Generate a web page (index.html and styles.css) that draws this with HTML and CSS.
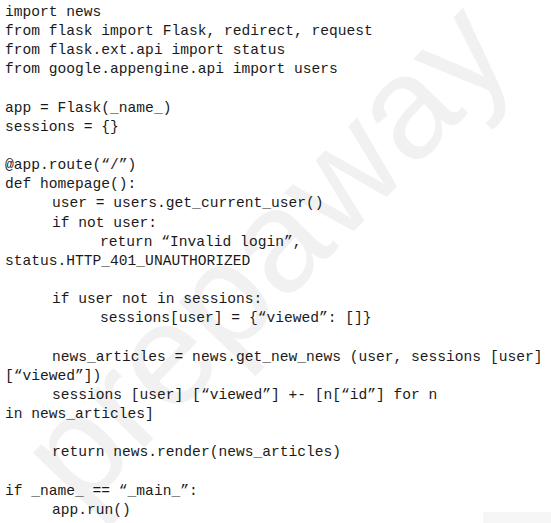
FILE: index.html
```html
<!DOCTYPE html>
<html>
<head>
<meta charset="utf-8">
<link rel="stylesheet" href="styles.css">
</head>
<body>
<div class="page">
  <div class="watermark">prepaway</div>
  <div class="code">
    <div class="line">import news</div>
    <div class="line">from flask import Flask, redirect, request</div>
    <div class="line">from flask.ext.api import status</div>
    <div class="line">from google.appengine.api import users</div>
    <div class="line blank"></div>
    <div class="line">app = Flask(_name_)</div>
    <div class="line">sessions = {}</div>
    <div class="line blank"></div>
    <div class="line">@app.route(“/”)</div>
    <div class="line">def homepage():</div>
    <div class="line i1">user = users.get_current_user()</div>
    <div class="line i1">if not user:</div>
    <div class="line i2">return “Invalid login”,</div>
    <div class="line">status.HTTP_401_UNAUTHORIZED</div>
    <div class="line blank"></div>
    <div class="line i1">if user not in sessions:</div>
    <div class="line i2">sessions[user] = {“viewed”: []}</div>
    <div class="line blank"></div>
    <div class="line i1">news_articles = news.get_new_news (user, sessions [user]</div>
    <div class="line">[“viewed”])</div>
    <div class="line i1">sessions [user] [“viewed”] +- [n[“id”] for n</div>
    <div class="line">in news_articles]</div>
    <div class="line blank"></div>
    <div class="line i1">return news.render(news_articles)</div>
    <div class="line blank"></div>
    <div class="line">if _name_ == “_main_”:</div>
    <div class="line i1">app.run()</div>
  </div>
  <div class="corner"></div>
</div>
</body>
</html>
```
FILE: styles.css
```css
html, body {
  margin: 0;
  padding: 0;
  background: #ffffff;
}
.page {
  position: relative;
  width: 551px;
  height: 523px;
  overflow: hidden;
}
.watermark {
  position: absolute;
  left: 72px;
  top: 395px;
  font-family: "Liberation Sans", Arial, sans-serif;
  font-size: 145px;
  line-height: 1;
  height: 145px;
  color: #f1f1f1;
  white-space: nowrap;
  transform: rotate(-46deg);
  transform-origin: 0 75%;
  z-index: 0;
}
.code {
  position: relative;
  z-index: 1;
  padding: 3px 0 0 5px;
  font-family: "Liberation Mono", "Courier New", monospace;
  font-size: 14.6px;
  color: #1a1a1a;
}
.line {
  height: 19.15px;
  line-height: 19.15px;
  white-space: pre;
}
.i1 { padding-left: 47px; }
.i2 { padding-left: 95px; }
.corner {
  position: absolute;
  right: 0;
  bottom: 0;
  width: 68px;
  height: 11px;
  background: #f6f6f6;
}
```
